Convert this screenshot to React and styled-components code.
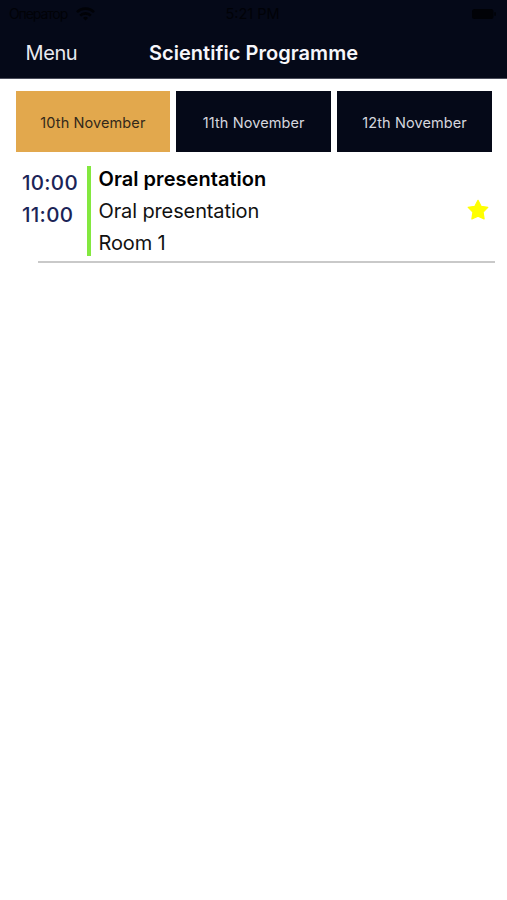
import styled, { createGlobalStyle } from "styled-components";

const GlobalStyle = createGlobalStyle`
    * {
        box-sizing: border-box;
    }
    body {
        margin: 0;
        background-color: #ffffff;
        font-family: Inter, "Liberation Sans", sans-serif;
    }
`

const Screen = styled.div`
    min-height: 900px;
    background-color: #ffffff;
`

const Header = styled.header`
    height: 79px;
    background-color: #050918;
    border-bottom: 1px solid #4b4d5a;
`

const StatusBar = styled.div`
    height: 27px;
    padding: 0 11px 0 9px;
    display: grid;
    grid-template-columns: 1fr auto 1fr;
    align-items: center;
    color: #010207;
    font-size: 14.5px;
    line-height: 27px;
`

const Carrier = styled.div`
    display: flex;
    align-items: center;
    gap: 9px;
    font-size: 14px;
    letter-spacing: -1.1px;
`

const Battery = styled.svg`
    justify-self: end;
`

const NavBar = styled.nav`
    height: 52px;
    padding: 0 25.5px;
    display: grid;
    grid-template-columns: 1fr auto 1fr;
    align-items: center;
    line-height: 52px;
`

const MenuLink = styled.a`
    color: #e9eaf0;
    font-size: 20px;
    letter-spacing: -0.4px;
`

const Title = styled.h1`
    margin: 0;
    color: #f7f7fb;
    font-size: 20px;
    font-weight: 600;
    letter-spacing: 0.05px;
`

const DayTabs = styled.div`
    padding: 12.4px 15px 0 15.5px;
    display: flex;
    gap: 6px;
`

const DayTab = styled.button`
    flex: 1;
    height: 61px;
    padding: 1px 0 0;
    border: none;
    background-color: ${props => props.$active ? "#e2a84d" : "#050918"};
    color: ${props => props.$active ? "#33291a" : "#d6d7df"};
    font-family: inherit;
    font-size: 14.5px;
    letter-spacing: 0.1px;
`

const Session = styled.article`
    margin-top: 13.6px;
    padding: 0 18px 0 22px;
    display: flex;
`

const Times = styled.div`
    width: 65px;
    padding-top: 1px;
    color: #1b2457;
    font-size: 20.5px;
    font-weight: 500;
    line-height: 32px;
    letter-spacing: 0.3px;
`

const Details = styled.div`
    flex: 1;
    height: 90px;
    padding-left: 7.5px;
    border-left: 4px solid #83e83f;
    color: #111111;
    font-size: 20px;
    line-height: 32px;
    letter-spacing: -0.12px;
`

const SessionTitle = styled.div`
    margin-top: -3px;
    color: #000000;
    font-weight: 600;
    letter-spacing: 0.04px;
`

const Star = styled.svg`
    margin-top: 33px;
`

const Divider = styled.hr`
    height: 2px;
    margin: 5px 12px 0 38px;
    border: none;
    background-color: #c9c9c9;
`

const days = ["10th November", "11th November", "12th November"]

const sessions = [
    {
        "start": "10:00",
        "end": "11:00",
        "title": "Oral presentation",
        "type": "Oral presentation",
        "room": "Room 1"
    },
]

export default function App(){
    return (
        <Screen>
            <GlobalStyle />
            <Header>
                <StatusBar>
                    <Carrier>
                        <span>Оператор</span>
                        <svg width="19" height="14" viewBox="0 0 19 14" fill="none" stroke="#010207" strokeWidth="2.6">
                            <path d="M1 5.2a12 12 0 0 1 17 0" />
                            <path d="M4.2 8.6a7.5 7.5 0 0 1 10.6 0" />
                            <path d="M9.5 13.5 7 11a3.5 3.5 0 0 1 5 0z" fill="#010207" stroke="none" />
                        </svg>
                    </Carrier>
                    <span>5:21 PM</span>
                    <Battery width="24" height="10" viewBox="0 0 24 10" fill="#010207">
                        <rect width="21.5" height="10" rx="2.5" />
                        <rect x="22.3" y="3" width="1.5" height="4" rx="0.7" />
                    </Battery>
                </StatusBar>
                <NavBar>
                    <MenuLink>Menu</MenuLink>
                    <Title>Scientific Programme</Title>
                </NavBar>
            </Header>
            <DayTabs>
                {days.map((day, i) => (
                    <DayTab key={day} $active={i === 0}>{day}</DayTab>
                ))}
            </DayTabs>
            {sessions.map(session => (
                <section key={session.start}>
                    <Session>
                        <Times>
                            <div>{session.start}</div>
                            <div>{session.end}</div>
                        </Times>
                        <Details>
                            <SessionTitle>{session.title}</SessionTitle>
                            <div>{session.type}</div>
                            <div>{session.room}</div>
                        </Details>
                        <Star width="22" height="22" viewBox="0 0 22 22" fill="#ffff00" stroke="#ffff00" strokeWidth="1.2" strokeLinejoin="round">
                            <path d="M11 1.3 14.1 7.3 20.8 8.3 16.1 13.1 17.1 19.9 11 17.3 4.9 19.9 5.9 13.1 1.2 8.3 7.9 7.3z" />
                        </Star>
                    </Session>
                    <Divider />
                </section>
            ))}
        </Screen>
    )
}
